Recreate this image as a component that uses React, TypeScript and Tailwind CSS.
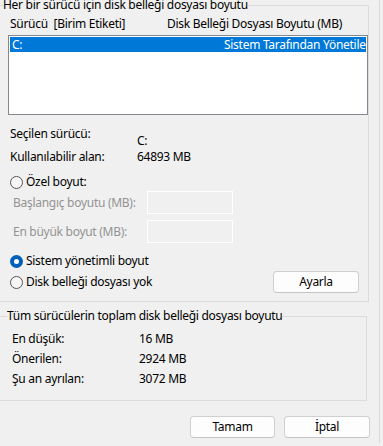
export default function App() {
  return (
    <div className="w-[383px] h-[446px] overflow-hidden bg-[#f0f0f0] font-['Noto_Sans',sans-serif] text-[12px] leading-[16px] tracking-[-0.28px] text-black">
      <div className="w-[380px] h-full border-r border-[#dadada]">
        {/* per-drive group */}
        <fieldset className="-ml-[6px] -mt-[3px] w-[373px] border border-[#dcdcdc] p-0 pb-[8px]">
          <legend className="ml-[8px] px-0 h-[16px] whitespace-nowrap">Her bir sürücü için disk belleği dosyası boyutu</legend>

          <div className="mt-[3px] ml-[15px] flex whitespace-pre">
            <span className="w-[157px]">Sürücü  [Birim Etiketi]</span>
            <span>Disk Belleği Dosyası Boyutu (MB)</span>
          </div>

          <div className="mt-[3px] ml-[13px] w-[360px] h-[80px] border border-[#828790] bg-white p-[1px]">
            <div className="h-[15px] bg-[#0078d7] text-white flex leading-[15px] overflow-hidden whitespace-nowrap">
              <span className="pl-[2px] w-[214px] shrink-0">C:</span>
              <span className="shrink-0">Sistem Tarafından Yönetilen</span>
            </div>
          </div>

          <div className="mt-[11px] ml-[15px] flex items-start">
            <span className="w-[127px]">Seçilen sürücü:</span>
            <span className="mt-[7px]">C:</span>
          </div>
          <div className="ml-[15px] flex">
            <span className="w-[127px]">Kullanılabilir alan:</span>
            <span>64893 MB</span>
          </div>

          <Radio className="mt-[9px]" label="Özel boyut:" />

          <div className="mt-[1px] ml-[18px] flex items-center h-[23px] text-[#939393]">
            <span className="w-[134px]">Başlangıç boyutu (MB):</span>
            <div className="w-[86px] h-[23px] border border-white" />
          </div>
          <div className="mt-[6px] ml-[18px] flex items-center h-[23px] text-[#939393]">
            <span className="w-[134px]">En büyük boyut (MB):</span>
            <div className="w-[86px] h-[23px] border border-white" />
          </div>

          <Radio className="mt-[10px]" label="Sistem yönetimli boyut" checked />

          <div className="mt-[2px] flex items-center justify-between h-[22px] pr-[9px]">
            <Radio label="Disk belleği dosyası yok" />
            <Button className="w-[86px]">Ayarla</Button>
          </div>
        </fieldset>

        {/* total group */}
        <fieldset className="-ml-[6px] mt-[6px] w-[373px] border border-[#dcdcdc] p-0 pb-[13px]">
          <legend className="ml-[12px] px-0 h-[16px] whitespace-nowrap">Tüm sürücülerin toplam disk belleği dosyası boyutu</legend>
          <div className="mt-[7px] ml-[17px] flex flex-col gap-[4px]">
            {[
              ['En düşük:', '16 MB'],
              ['Önerilen:', '2924 MB'],
              ['Şu an ayrılan:', '3072 MB'],
            ].map(([k, v]) => (
              <div key={k} className="flex">
                <span className="w-[127px]">{k}</span>
                <span>{v}</span>
              </div>
            ))}
          </div>
        </fieldset>

        <div className="mt-[15px] pl-[190px] flex gap-[9px]">
          <Button className="w-[85px]">Tamam</Button>
          <Button className="w-[86px]">İptal</Button>
        </div>
      </div>
    </div>
  );
}

function Radio({ label, checked, className = '' }: { label: string; checked?: boolean; className?: string }) {
  return (
    <div className={`ml-[15px] flex items-center ${className}`}>
      {checked ? (
        <span className="w-[13px] h-[13px] rounded-full bg-[#005fb8] flex items-center justify-center">
          <span className="w-[5px] h-[5px] rounded-full bg-white" />
        </span>
      ) : (
        <span className="w-[13px] h-[13px] rounded-full border border-[#555] bg-[#f6f6f6]" />
      )}
      <span className="ml-[3px]">{label}</span>
    </div>
  );
}

function Button({ children, className = '' }: { children: React.ReactNode; className?: string }) {
  return (
    <button className={`h-[22px] rounded-[4px] border border-[#d0d0d0] border-b-[#c4c4c4] bg-[#fdfdfd] text-center leading-[20px] ${className}`}>
      {children}
    </button>
  );
}
